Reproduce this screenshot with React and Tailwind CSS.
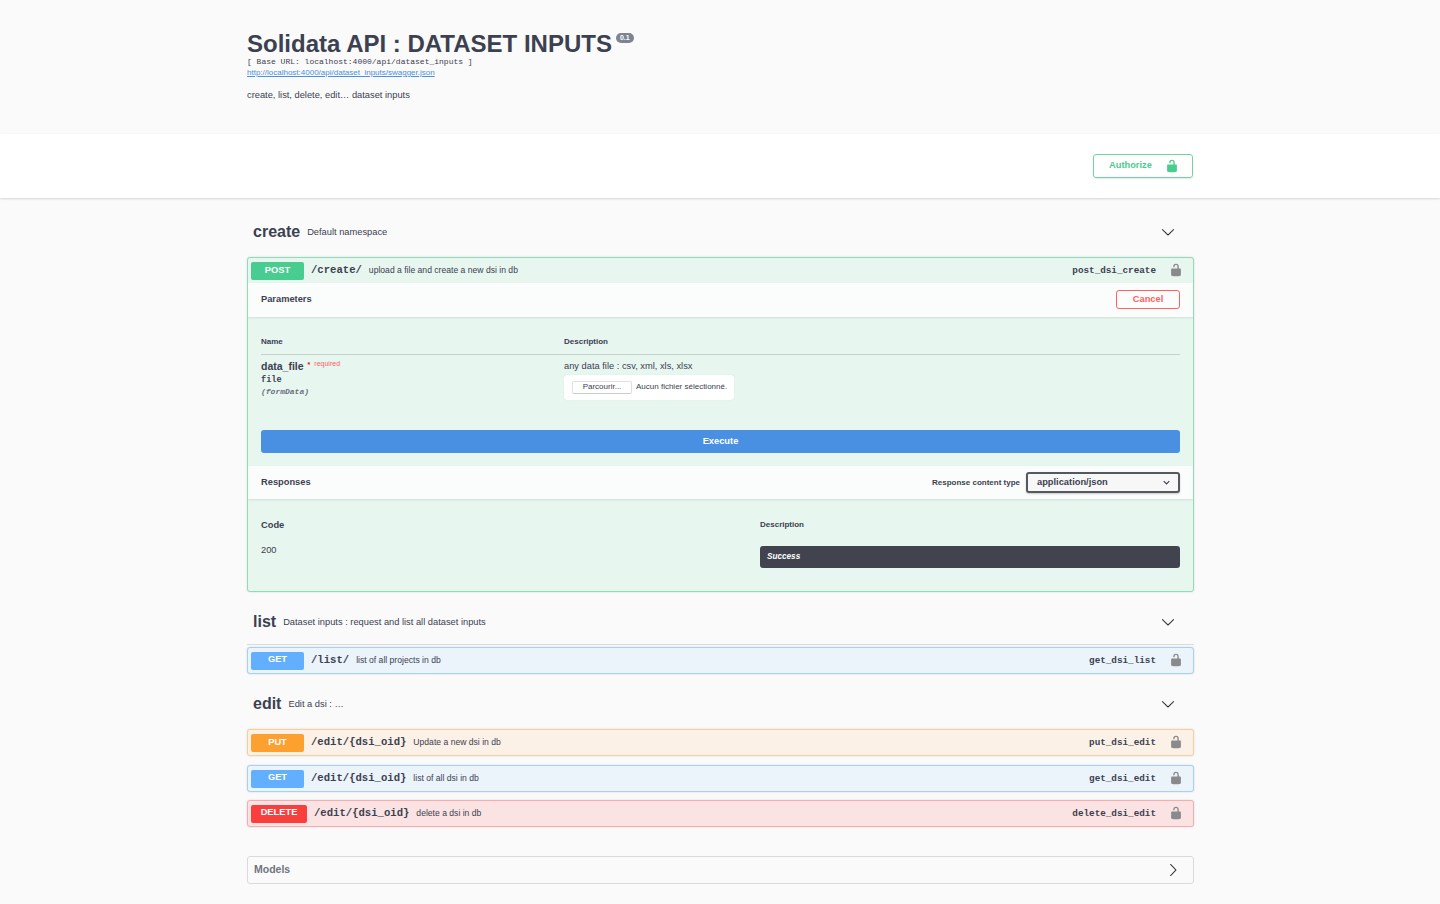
import React from "react";

const sans = "font-['Liberation_Sans',Arial,sans-serif]";
const mono = "font-['Liberation_Mono','Courier_New',monospace]";

function Lock({ className }) {
  return (
    <svg viewBox="0 0 20 20" className={className} fill="currentColor">
      <path d="M15.8 8H14V5.6C14 2.703 12.665 1 10 1 7.334 1 6 2.703 6 5.6V6h2v-.801C8 3.754 8.797 3 10 3c1.203 0 2 .754 2 2.199V8H4c-.553 0-1 .646-1 1.199V17c0 .549.428 1.139.951 1.307l1.197.387C5.672 18.861 6.55 19 7.1 19h5.8c.549 0 1.428-.139 1.951-.307l1.196-.387c.524-.167.953-.757.953-1.306V9.199C17 8.646 16.352 8 15.8 8z" />
    </svg>
  );
}

function Chevron({ right }) {
  return (
    <svg viewBox="0 0 20 20" className="w-[14px] h-[14px] text-[#303030]" fill="currentColor">
      {right ? (
        <path d="M13.25 10L6.109 2.58a.697.697 0 0 1 0-.979.68.68 0 0 1 .969 0l7.83 7.908a.697.697 0 0 1 0 .979l-7.83 7.908a.68.68 0 0 1-.969 0 .697.697 0 0 1 0-.979L13.25 10z" />
      ) : (
        <path d="M17.418 6.109a.697.697 0 0 1 .979 0 .68.68 0 0 1 0 .969l-7.908 7.83a.697.697 0 0 1-.979 0l-7.908-7.83a.68.68 0 0 1 0-.969.697.697 0 0 1 .979 0L10 13.25l7.418-7.141z" />
      )}
    </svg>
  );
}

function TagHeading({ name, desc, className }) {
  return (
    <div className={`flex items-center pl-[6px] pr-[19px] ${className}`}>
      <span className={`${sans} text-[16px] font-bold text-[#3b4151]`}>{name}</span>
      <span className={`${sans} text-[9.3px] text-[#3b4151] ml-[7px] pt-[2px]`}>{desc}</span>
      <span className="ml-auto flex"><Chevron /></span>
    </div>
  );
}

function OpRow({ method, path, summary, opId, badge, border, bg, wide, badgeLeading, idClass = "pt-[1px]", className }) {
  return (
    <div className={`flex items-center h-[27px] rounded-[3px] border ${border} ${bg} pl-[3px] pr-[10px] shadow-[0_0_2px_rgba(0,0,0,0.15)] ${className}`}>
      <span className={`${sans} flex justify-center rounded-[2px] h-[18px] text-white text-[9.3px] font-bold ${badge} ${wide ? "w-[56px]" : "w-[53px]"} ${badgeLeading}`}>
        {method}
      </span>
      <span className={`${mono} font-bold text-[10.6px] text-[#3b4151] ml-[7px]`}>{path}</span>
      <span className={`${sans} text-[8.6px] text-[#3b4151] ml-[7px]`}>{summary}</span>
      <span className={`${mono} font-bold text-[9.3px] text-[#3b4151] ml-auto ${idClass}`}>{opId}</span>
      <Lock className="w-[14px] h-[14px] text-[#8a8a8a] ml-[13px] mb-[1px]" />
    </div>
  );
}

export default function App() {
  return (
    <div className={`${sans} min-h-[904px] bg-[#fafafa] text-[#3b4151]`}>
      {/* Info */}
      <div className="h-[134px] w-[946px] mx-auto pt-[28px]">
        <div className="flex items-start h-[28px]">
          <h2 className="text-[24px] leading-[31px] font-bold text-[#3b4151]">Solidata API : DATASET INPUTS</h2>
          <span className="ml-[4px] mt-[5px] h-[10px] px-[4px] rounded-full bg-[#7d8492] text-white text-[7px] leading-[10px] font-bold">0.1</span>
        </div>
        <p className={`${mono} text-[8px] leading-[10px] text-[#3b4151] pt-[1px]`}>[ Base URL: localhost:4000/api/dataset_inputs ]</p>
        <a className="block text-[8px] leading-[11px] text-[#4990e2] underline">http://localhost:4000/api/dataset_inputs/swagger.json</a>
        <p className="text-[9.3px] leading-[12px] mt-[11px] text-[#3b4151]">create, list, delete, edit… dataset inputs</p>
      </div>

      {/* Authorize band */}
      <div className="h-[64px] bg-white shadow-[0_1px_2px_rgba(0,0,0,0.15)] flex items-center">
        <div className="w-[946px] mx-auto flex justify-end">
          <button className="w-[100px] h-[24px] border border-[#6fd4a5] rounded-[3px] flex items-center pl-[15px] text-[#49cc90] text-[9.3px] font-bold shadow-[0_1px_2px_rgba(0,0,0,0.1)]">
            Authorize
            <Lock className="w-[14px] h-[14px] ml-[13px]" />
          </button>
        </div>
      </div>

      <div className="w-[947px] ml-[247px]">
        <TagHeading name="create" desc="Default namespace" className="h-[34px] mt-[17px]" />

        {/* POST block, expanded */}
        <div className="mt-[8px] h-[335px] rounded-[3px] border border-[#8edcb8] bg-[#e8f6f0] shadow-[0_0_2px_rgba(0,0,0,0.15)] overflow-hidden">
          <div className="h-[25px] flex items-center pl-[3px] pr-[10px]">
            <span className="w-[53px] h-[18px] rounded-[2px] bg-[#49cc90] text-white text-[9.3px] font-bold leading-[17px] text-center">POST</span>
            <span className={`${mono} font-bold text-[10.6px] ml-[7px]`}>/create/</span>
            <span className="text-[8.6px] ml-[7px]">upload a file and create a new dsi in db</span>
            <span className={`${mono} font-bold text-[9.3px] ml-auto pt-[1px]`}>post_dsi_create</span>
            <Lock className="w-[14px] h-[14px] text-[#8a8a8a] ml-[13px] mb-[1px]" />
          </div>

          <div className="h-[34px] bg-[#fbfdfc] shadow-[0_1px_2px_rgba(0,0,0,0.1)] flex items-center justify-between pl-[13px] pr-[13px]">
            <span className="text-[9.3px] font-bold">Parameters</span>
            <button className="w-[64px] h-[19px] mb-[2px] border border-[#ff6060] rounded-[3px] text-[#ff6060] text-[9.3px] font-bold leading-[15px] bg-transparent">Cancel</button>
          </div>

          <div className="px-[13px]">
            <div className="flex h-[38px] items-end border-b border-[#c5d2cc] pb-[7px]">
              <span className="w-[303px] text-[8px] font-bold leading-[10px]">Name</span>
              <span className="text-[8px] font-bold leading-[10px]">Description</span>
            </div>
            <div className="flex h-[74px]">
              <div className="w-[303px] pt-[5px]">
                <div className="flex items-start h-[13px]">
                  <span className="text-[10.5px] font-bold leading-[13px]">data_file</span>
                  <span className="text-[#ff0000] text-[7px] leading-[9px] font-bold ml-[4px]">*</span>
                  <span className="text-[#ff6060] text-[7px] leading-[7px] ml-[4px]">required</span>
                </div>
                <div className={`${mono} font-bold text-[8.6px] leading-[12px] mt-[1px]`}>file</div>
                <div className={`${mono} font-bold italic text-[8px] leading-[12px] text-[#6b7280]`}>(formData)</div>
              </div>
              <div className="pt-[5px]">
                <p className="text-[9.3px] leading-[12px]">any data file : csv, xml, xls, xlsx</p>
                <div className="mt-[3px] w-[170px] h-[25px] bg-white rounded-[3px] flex items-center pl-[8px] pb-[1px] shadow-[0_0_1px_rgba(0,0,0,0.15)]">
                  <span className="w-[60px] h-[13px] rounded-[2px] border border-[#e0e0e0] border-b-[#cccccc] bg-white text-[8px] leading-[10px] text-center text-[#3b4151]">Parcourir...</span>
                  <span className="text-[8px] ml-[4px] text-[#3b4151]">Aucun fichier sélectionné.</span>
                </div>
              </div>
            </div>
            <button className="block w-full h-[23px] rounded-[3px] bg-[#4990e2] text-white text-[9.3px] font-bold mt-[1px]">Execute</button>
          </div>

          <div className="h-[33px] mt-[13px] bg-[#fbfdfc] shadow-[0_1px_2px_rgba(0,0,0,0.1)] flex items-center pl-[13px] pr-[13px]">
            <span className="text-[9.3px] font-bold">Responses</span>
            <span className="ml-auto text-[8px] font-bold">Response content type</span>
            <div className="ml-[6px] w-[154px] h-[21px] border-2 border-[#55585f] rounded-[3px] bg-[#f7f7f7] flex items-center justify-between pl-[9px] pr-[8px] text-[9.3px] font-bold shadow-[0_1px_2px_rgba(0,0,0,0.2)]">
              application/json
              <svg viewBox="0 0 10 10" className="w-[7px] h-[7px]" fill="none" stroke="currentColor" strokeWidth="1.6"><path d="M1 3l4 4 4-4" /></svg>
            </div>
          </div>

          <div className="flex pl-[13px] pr-[13px]">
            <div className="w-[499px]">
              <div className="text-[9.3px] font-bold leading-[12px] mt-[20px]">Code</div>
              <div className="text-[9.3px] leading-[12px] mt-[13px]">200</div>
            </div>
            <div className="flex-1">
              <div className="text-[8px] font-bold leading-[12px] mt-[20px]">Description</div>
              <div className="h-[22px] mt-[15px] rounded-[3px] bg-[#41444e] flex items-center pl-[7px] text-white text-[8.2px] font-bold italic">Success</div>
            </div>
          </div>
        </div>

        {/* list */}
        <TagHeading name="list" desc="Dataset inputs : request and list all dataset inputs" className="h-[40px] pb-[6px] mt-[13px] border-b border-[#d8dade]" />
        <OpRow method="GET" path="/list/" summary="list of all projects in db" opId="get_dsi_list" badge="bg-[#61affe]" border="border-[#a6d0f8]" bg="bg-[#ebf3fb]" badgeLeading="leading-[15px]" className="mt-[2px]" />

        {/* edit */}
        <TagHeading name="edit" desc="Edit a dsi : …" className="h-[34px] mt-[13px]" />
        <OpRow method="PUT" path="/edit/{dsi_oid}" summary="Update a new dsi in db" opId="put_dsi_edit" badge="bg-[#fca130]" border="border-[#fbcf9a]" bg="bg-[#fbf1e6]" badgeLeading="leading-[17px]" className="mt-[8px]" />
        <OpRow method="GET" path="/edit/{dsi_oid}" summary="list of all dsi in db" opId="get_dsi_edit" badge="bg-[#61affe]" border="border-[#a6d0f8]" bg="bg-[#ebf3fb]" badgeLeading="leading-[14px]" idClass="" className="mt-[9px]" />
        <OpRow method="DELETE" path="/edit/{dsi_oid}" summary="delete a dsi in db" opId="delete_dsi_edit" badge="bg-[#f93e3e]" border="border-[#f7adad]" bg="bg-[#fbe3e3]" wide badgeLeading="leading-[15px]" className="mt-[8px]" />

        {/* Models */}
        <div className="mt-[29px] h-[28px] rounded-[3px] border border-[#d8dade] flex items-center pl-[6px] pr-[13px]">
          <span className="text-[10.5px] font-bold text-[#6f7480]">Models</span>
          <span className="ml-auto flex"><Chevron right /></span>
        </div>
      </div>
    </div>
  );
}
